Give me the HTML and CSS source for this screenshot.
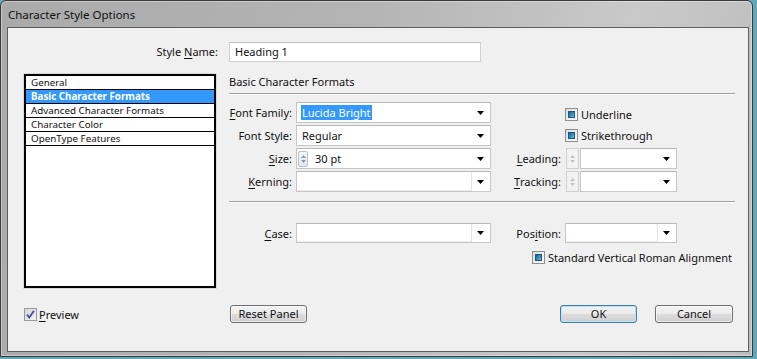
FILE: index.html
```html
<!DOCTYPE html>
<html>
<head>
<meta charset="utf-8">
<title>Character Style Options</title>
<link rel="stylesheet" href="styles.css">
</head>
<body>
<div class="window">
  <div class="titlebar">Character Style Options</div>
  <div class="client">
    <div class="name-label">Style <u>N</u>ame:</div>
    <div class="name-input">Heading 1</div>

    <div class="list">
      <div class="item">General</div>
      <div class="item sel">Basic Character Formats</div>
      <div class="item">Advanced Character Formats</div>
      <div class="item">Character Color</div>
      <div class="item">OpenType Features</div>
    </div>

    <div class="panel">
      <div class="panel-title">Basic Character Formats</div>
      <div class="form upper">
        <div class="lbl r1"><u>F</u>ont Family:</div>
        <div class="dd r1"><div class="field"><span class="hl">Lucida Bright</span></div><div class="arrow"><svg width="7" height="4" viewBox="0 0 7 4"><path d="M0 0H7L3.5 4Z" fill="#000"/></svg></div></div>
        <div class="chk r1 c4 first"><span class="cb"></span><span>Underline</span></div>

        <div class="lbl r2">Font Style:</div>
        <div class="dd r2"><div class="field">Regular</div><div class="arrow"><svg width="7" height="4" viewBox="0 0 7 4"><path d="M0 0H7L3.5 4Z" fill="#000"/></svg></div></div>
        <div class="chk r2 c4"><span class="cb"></span><span>Strikethrough</span></div>

        <div class="lbl r3"><u>S</u>ize:</div>
        <div class="dd r3"><div class="spin"><svg width="7" height="12" viewBox="0 0 7 12"><path d="M1 5L3.5 2L6 5Z" fill="#8a9aab"/><path d="M1 7L3.5 10L6 7Z" fill="#8a9aab"/></svg></div><div class="field size">30 pt</div><div class="arrow"><svg width="7" height="4" viewBox="0 0 7 4"><path d="M0 0H7L3.5 4Z" fill="#000"/></svg></div></div>
        <div class="lbl r3 c3"><u>L</u>eading:</div>
        <div class="spinctl r3 c4"><div class="spin off"><svg width="7" height="12" viewBox="0 0 7 12"><path d="M1 5L3.5 2L6 5Z" fill="#c4c4c4"/><path d="M1 7L3.5 10L6 7Z" fill="#c4c4c4"/></svg></div><div class="dd"><div class="field"></div><div class="arrow"><svg width="7" height="4" viewBox="0 0 7 4"><path d="M0 0H7L3.5 4Z" fill="#000"/></svg></div></div></div>

        <div class="lbl r4"><u>K</u>erning:</div>
        <div class="dd r4 boxed"><div class="field"></div><div class="arrow"><svg width="7" height="4" viewBox="0 0 7 4"><path d="M0 0H7L3.5 4Z" fill="#000"/></svg></div></div>
        <div class="lbl r4 c3"><u>T</u>racking:</div>
        <div class="spinctl r4 c4"><div class="spin off"><svg width="7" height="12" viewBox="0 0 7 12"><path d="M1 5L3.5 2L6 5Z" fill="#c4c4c4"/><path d="M1 7L3.5 10L6 7Z" fill="#c4c4c4"/></svg></div><div class="dd"><div class="field"></div><div class="arrow"><svg width="7" height="4" viewBox="0 0 7 4"><path d="M0 0H7L3.5 4Z" fill="#000"/></svg></div></div></div>
      </div>

      <div class="sep"></div>

      <div class="form lower">
        <div class="lbl"><u>C</u>ase:</div>
        <div class="dd boxed"><div class="field"></div><div class="arrow"><svg width="7" height="4" viewBox="0 0 7 4"><path d="M0 0H7L3.5 4Z" fill="#000"/></svg></div></div>
        <div class="lbl">Pos<u>i</u>tion:</div>
        <div class="dd boxed"><div class="field"></div><div class="arrow"><svg width="7" height="4" viewBox="0 0 7 4"><path d="M0 0H7L3.5 4Z" fill="#000"/></svg></div></div>
      </div>

      <div class="svra"><div class="chk"><span class="cb"></span><span>Standard Vertical Roman Alignment</span></div></div>
    </div>

    <div class="preview">
      <span class="cb-check"><svg width="11" height="11" viewBox="0 0 11 11"><path d="M2 5.5L4.3 8.5L9 1.8" fill="none" stroke="#3c4fa6" stroke-width="1.8"/></svg></span>
      <span><u>P</u>review</span>
    </div>

    <div class="buttons">
      <button class="btn reset">Reset Panel</button>
      <span class="spacer"></span>
      <button class="btn ok">OK</button>
      <button class="btn cancel">Cancel</button>
    </div>
  </div>
</div>
</body>
</html>
```
FILE: styles.css
```css
html, body {
  margin: 0;
  padding: 0;
}
body {
  width: 757px;
  height: 359px;
  background: #63a9bd;
  font-family: "Noto Sans", "DejaVu Sans", sans-serif;
  font-size: 11px;
  color: #111;
  overflow: hidden;
}
u { text-decoration: underline; text-underline-offset: 2px; }

.window {
  width: 753px;
  height: 357px;
  box-sizing: border-box;
  border: 1px solid #3a3a3a;
  border-radius: 6px 6px 0 0;
  background: linear-gradient(100deg, #aaaaaa 0%, #b4b4b4 45%, #c9c9c9 78%, #bdbdbd 100%);
  box-shadow: inset 0 0 0 1px rgba(255,255,255,0.35);
  padding: 0 3px 4px 6px;
  display: flex;
  flex-direction: column;
}
.titlebar {
  height: 26px;
  display: flex;
  align-items: center;
  padding-left: 1px;
  padding-top: 1px;
  box-sizing: border-box;
  font-size: 11.5px;
  color: #111;
}
.client {
  flex: 1;
  border: 1px solid #5d5d5d;
  background: #f0f0f0;
  display: grid;
  grid-template-columns: 192px 506px;
  grid-template-rows: 20px 226px auto;
  column-gap: 13px;
  padding: 14px 0 0 16px;
  align-content: start;
}

.name-label {
  text-align: right;
  margin-right: -2px;
  line-height: 20px;
}
.name-input {
  width: 252px;
  height: 20px;
  box-sizing: border-box;
  background: #fff;
  border: 1px solid #d0d0d0;
  border-top-color: #c0c0c0;
  padding-left: 5px;
  line-height: 18px;
}

.list {
  margin-top: 12px;
  box-sizing: border-box;
  border: 2px solid #000;
  background: #fff;
  outline: 1px solid #d8d8d8;
  padding-top: 0;
  font-size: 9.8px;
}
.item {
  height: 13px;
  line-height: 13px;
  border-bottom: 1px solid #000;
  padding-left: 5px;
  white-space: nowrap;
}
.item.sel {
  background: #3399ff;
  color: #fff;
  font-weight: bold;
}

.panel {
  margin-top: 12px;
  display: flex;
  flex-direction: column;
}
.panel-title {
  height: 19px;
  line-height: 15px;
  border-bottom: 1px solid #a0a0a0;
  box-shadow: 0 1px 0 #ffffff;
}
.form {
  display: grid;
  grid-template-columns: 63px 195px 66px 112px;
  column-gap: 4px;
  row-gap: 2px;
}
.upper {
  margin-top: 8px;
  grid-template-rows: 21px 21px 21px 21px;
}
.lower {
  margin-top: 21px;
  grid-template-rows: 20px;
}
.r1 { grid-row: 1; }
.r2 { grid-row: 2; }
.r3 { grid-row: 3; }
.r4 { grid-row: 4; }
.c3 { grid-column: 3; }
.c4 { grid-column: 4; }
.upper .lbl { grid-column: 1; }
.upper .lbl.c3 { grid-column: 3; }
.upper > .dd { grid-column: 2; }

.lbl {
  text-align: right;
  display: flex;
  align-items: center;
  justify-content: flex-end;
  white-space: nowrap;
}
.dd {
  display: flex;
  align-items: center;
  background: #fff;
  border: 1px solid #c6c6c6;
  border-top-color: #b8b8b8;
  box-sizing: border-box;
  height: 100%;
  min-width: 0;
}
.dd .field {
  flex: 1;
  height: 100%;
  display: flex;
  align-items: center;
  padding-left: 5px;
  box-sizing: border-box;
  white-space: nowrap;
}
.dd .field.size { padding-left: 7px; }
.dd.boxed .field {
  border-right: 1px solid #e4e4e4;
  border-bottom: 1px solid #ececec;
}
.dd .arrow {
  width: 17px;
  display: flex;
  justify-content: center;
  align-items: center;
  padding-right: 1px;
}
.hl {
  background: #3399ff;
  color: #fff;
  padding: 0 1px;
  margin-left: -1px;
  line-height: 15px;
}

.spin {
  width: 10px;
  height: 16px;
  margin-left: 1px;
  border: 1px solid #b5c2d0;
  border-radius: 2px;
  background: linear-gradient(#f4f7fa, #dfe6ee);
  display: flex;
  align-items: center;
  justify-content: center;
  box-sizing: border-box;
}
.spin svg { display: block; }
.spinctl {
  display: flex;
  align-items: stretch;
  padding-left: 1px;
}
.spinctl .spin.off {
  width: 13px;
  height: auto;
  margin: 0 1px 0 0;
  border: 1px solid #d0d0d0;
  border-radius: 0;
  background: #f2f2f2;
}
.spinctl .dd { flex: 1; }

.chk {
  display: flex;
  align-items: center;
  gap: 3px;
  white-space: nowrap;
}
.chk.first { padding-top: 3px; }
.cb {
  width: 13px;
  height: 13px;
  box-sizing: border-box;
  border: 1px solid #8e8f8f;
  background: linear-gradient(135deg, #dcdcdc, #ffffff);
  padding: 2px;
  flex: none;
}
.cb::after {
  content: "";
  display: block;
  width: 100%;
  height: 100%;
  box-sizing: border-box;
  border: 1px solid #1f5680;
  background: linear-gradient(135deg, #1d5f8e 0%, #2f86ba 45%, #6cc2e8 100%);
}

.sep {
  margin-top: 9px;
  height: 0;
  border-top: 1px solid #a0a0a0;
  box-shadow: 0 1px 0 #ffffff;
}
.svra {
  margin-top: 7px;
  display: flex;
  justify-content: flex-end;
  padding-right: 3px;
  height: 14px;
}

.preview {
  margin-top: 17px;
  display: flex;
  align-items: center;
  gap: 2px;
  height: 18px;
}
.cb-check {
  width: 13px;
  height: 13px;
  box-sizing: border-box;
  border: 1px solid #9a9a9a;
  background: linear-gradient(135deg, #d8d8d8, #f2f2f2);
  display: flex;
  align-items: center;
  justify-content: center;
}
.cb-check svg { display: block; }

.buttons {
  margin-top: 17px;
  display: flex;
  align-items: center;
  padding: 0 2px 0 1px;
  height: 18px;
}
.spacer { flex: 1; }
.btn {
  font-family: "Noto Sans", "DejaVu Sans", sans-serif;
  font-size: 11px;
  color: #111;
  height: 18px;
  padding: 0;
  border: 1px solid #707070;
  border-radius: 3px;
  background: linear-gradient(#f3f3f3 0%, #ebebeb 48%, #dddddd 52%, #cfcfcf 100%);
  box-shadow: inset 0 0 0 1px rgba(255,255,255,0.6);
  line-height: 14px;
}
.reset { width: 77px; }
.ok {
  width: 77px;
  border-color: #3c7fb1;
  box-shadow: inset 0 0 0 1px #b9e2f6;
  margin-right: 18px;
}
.cancel { width: 78px; }
```
